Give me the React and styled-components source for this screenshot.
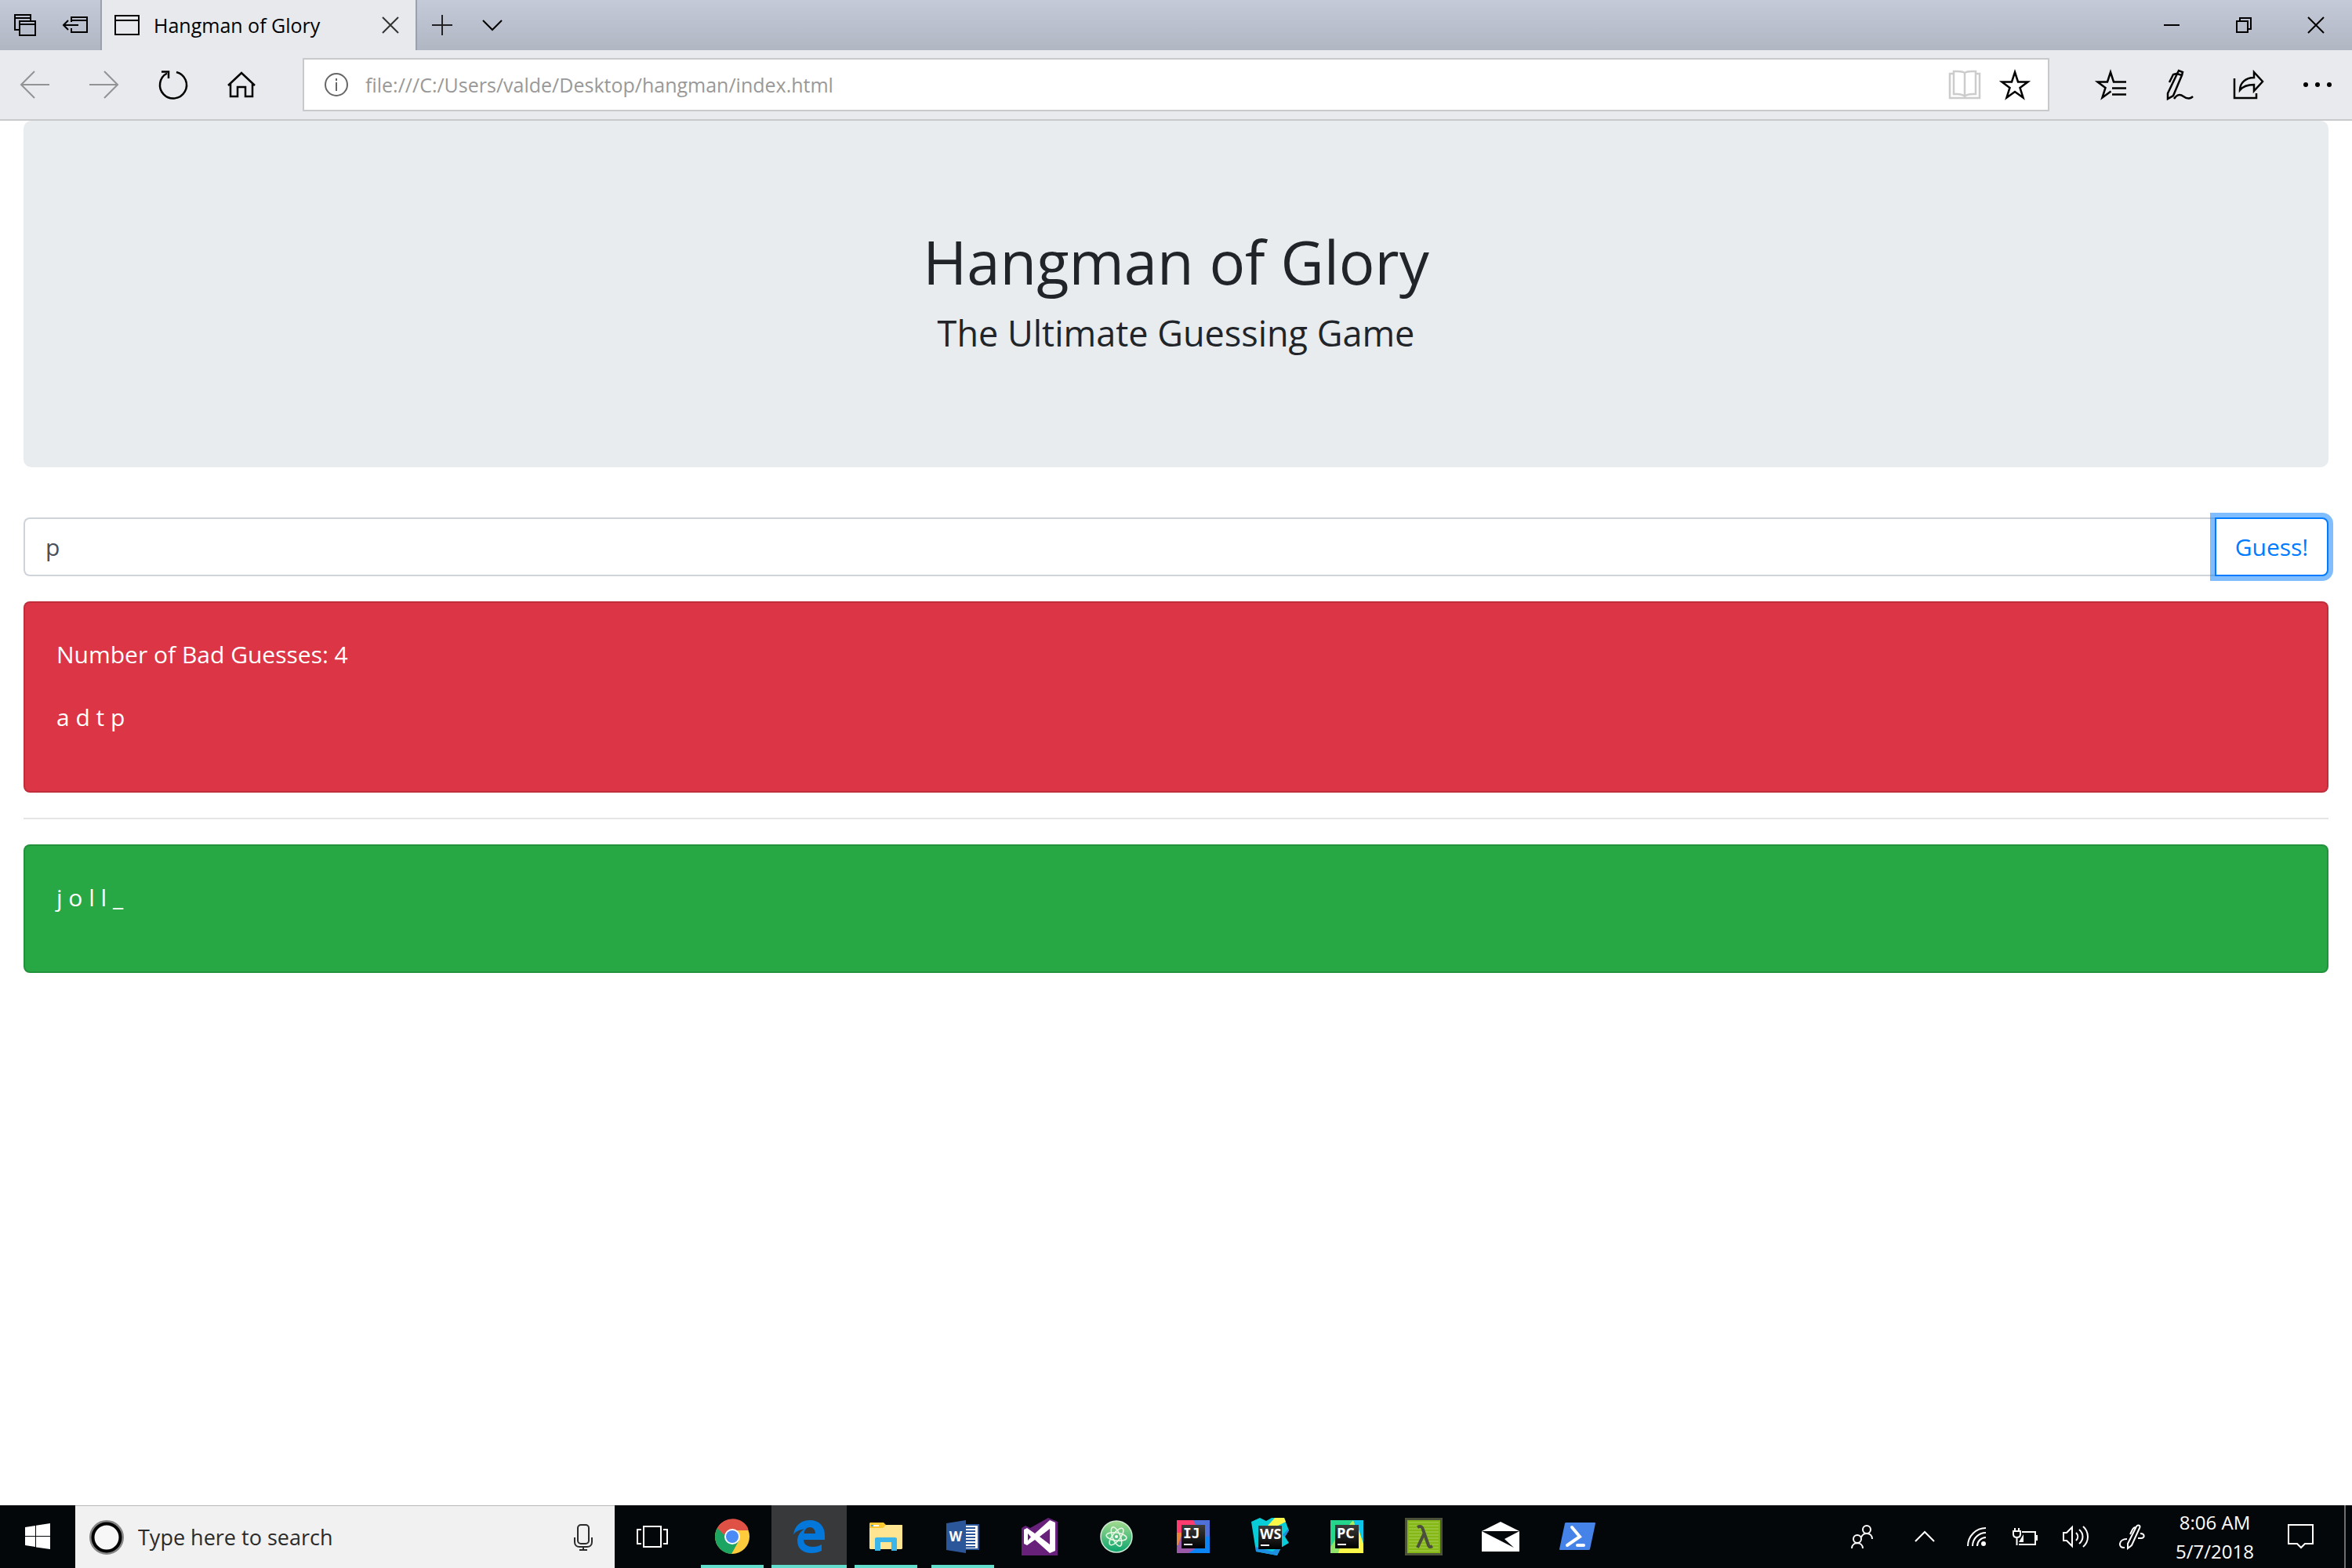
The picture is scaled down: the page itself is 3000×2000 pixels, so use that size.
import React, { useState } from 'react';
import styled, { createGlobalStyle } from 'styled-components';

const ui = '"Segoe UI", "Open Sans", "Noto Sans", sans-serif';

const GlobalStyle = createGlobalStyle`
  *, *::before, *::after { box-sizing: border-box; }
  body { margin: 0; background: #fff; font-family: ${ui}; }
  button, input { font-family: inherit; }
  h1, p { margin: 0; font-weight: 400; }
  svg { display: block; flex: none; overflow: visible; }
`;

const Screen = styled.div`
  display: flex;
  flex-direction: column;
  min-height: 100vh;
`;

/* browser chrome */
const TitleBar = styled.div`
  display: flex;
  height: 64px;
  background: linear-gradient(#c4cad8, #b0b6c2);
`;

const BarTools = styled.div`
  display: flex;
  align-items: center;
`;

const IconButton = styled.button`
  display: flex;
  align-items: center;
  justify-content: center;
  width: ${(p) => p.$w}px;
  height: 100%;
  padding: 0;
  border: 0;
  background: transparent;
  color: ${(p) => p.$color || '#000'};
`;

const Tab = styled.div`
  display: flex;
  align-items: center;
  width: 404px;
  padding-left: 16px;
  border: solid #9aa0ae;
  border-width: 0 2px;
  background: #e8e9ed;
  font-size: 25px;
`;

const TabTitle = styled.span`
  flex: 1;
  padding-left: 18px;
  white-space: nowrap;
`;

const Spacer = styled.div`
  flex: 1;
`;

const Toolbar = styled.div`
  display: flex;
  align-items: center;
  height: 90px;
  border-bottom: 2px solid #c8c9cb;
  background: #e9eaed;
`;

const AddressBox = styled.label`
  display: flex;
  align-items: center;
  flex: 1;
  height: 68px;
  margin: 0 34px;
  padding: 0 10px 0 26px;
  border: 2px solid #c8c9cb;
  background: #fff;
  color: #666;
`;

const Address = styled.input`
  flex: 1;
  min-width: 0;
  padding: 0 0 0 22px;
  border: 0;
  outline: 0;
  background: transparent;
  color: #999;
  font-size: 25px;
`;

/* page */
const Page = styled.main`
  flex: 1;
  padding: 0 30px;
  color: #212529;
  font-size: 30px;
  line-height: 48px;
`;

const Jumbotron = styled.header`
  padding: 132px 64px 126px;
  margin-bottom: 64px;
  border-radius: 10px;
  background: #e8ecef;
  text-align: center;
`;

const Title = styled.h1`
  margin-bottom: 14px;
  font-size: 76px;
  line-height: 96px;
`;

const Subtitle = styled.p`
  margin-bottom: 16px;
  font-size: 45px;
  line-height: 58px;
`;

const GuessForm = styled.form`
  display: flex;
  height: 75px;
  margin-bottom: 32px;
`;

const GuessInput = styled.input`
  flex: 1;
  min-width: 0;
  padding: 0 26px;
  border: 2px solid #ced4da;
  border-right: 0;
  border-radius: 8px 0 0 8px;
  outline: 0;
  color: #495057;
  font-size: 30px;
`;

const GuessButton = styled.button`
  width: 145px;
  padding: 0;
  border: 2px solid #007bff;
  border-radius: 0 8px 8px 0;
  background: #fff;
  box-shadow: 0 0 0 6px rgba(0, 123, 255, 0.5);
  color: #007bff;
  font-size: 30px;
`;

const Card = styled.section`
  padding: 42px 40px 38px;
  border: 2px solid rgba(0, 0, 0, 0.125);
  border-radius: 8px;
  background: ${(p) => p.$bg};
  background-clip: border-box;
  color: #fff;
`;

const CardText = styled.p`
  margin-bottom: 32px;
`;

const Rule = styled.hr`
  margin: 32px 0;
  border: 0;
  border-top: 2px solid #e5e5e5;
`;

/* taskbar */
const TaskBar = styled.footer`
  display: flex;
  height: 80px;
  background: #04070a;
  color: #fff;
`;

const Search = styled.label`
  display: flex;
  align-items: center;
  width: 688px;
  padding: 0 28px 0 18px;
  border-top: 1px solid #b8b8b8;
  background: #f1f1f1;
`;

const SearchInput = styled.input`
  flex: 1;
  min-width: 0;
  padding: 0 0 0 18px;
  border: 0;
  outline: 0;
  background: transparent;
  font-size: 27px;
  &::placeholder { color: #2b2b2b; opacity: 1; }
`;

const Apps = styled.nav`
  display: flex;
  gap: 2px;
  margin-left: 6px;
`;

const AppButton = styled.button`
  display: flex;
  align-items: center;
  justify-content: center;
  width: 96px;
  padding: 0;
  border: 0;
  background-color: ${(p) => (p.$active ? '#38393b' : 'transparent')};
  background-image: ${(p) => (p.$open ? 'linear-gradient(#62dccb, #62dccb)' : 'none')};
  background-repeat: no-repeat;
  background-position: bottom center;
  background-size: ${(p) => (p.$active ? '96px' : '80px')} 4px;
`;

const Clock = styled.button`
  width: 140px;
  padding: 0;
  border: 0;
  background: transparent;
  color: #fff;
  font-size: 24px;
  line-height: 37px;
  text-align: center;
`;

const ShowDesktop = styled.button`
  width: 10px;
  margin-left: 17px;
  padding: 0;
  border: 0;
  border-left: 2px solid #6c6e70;
  background: transparent;
`;

const Icon = ({ w, h = w, sw = 2, children }) => (
  <svg width={w} height={h} viewBox={`0 0 ${w} ${h}`} fill="none" stroke="currentColor" strokeWidth={sw} aria-hidden="true">
    {children}
  </svg>
);

const TabsAside = () => (
  <Icon w={28}><path d="M7 20H1V1h20v7M1 5h20" /><path d="M7 9h20v18H7zM7 13h20" /></Icon>
);
const SetAside = () => (
  <Icon w={32} h={22}><path d="M11 7V1h20v19H11v-5M11 5h20M1 11h19M7 5l-6 6 6 6" /></Icon>
);
const PageIcon = () => (
  <Icon w={32} h={26}><path d="M1 1h30v24H1zM1 7h30" /></Icon>
);
const Cross = () => <Icon w={20}><path d="M0 0l20 20M20 0L0 20" /></Icon>;
const Plus = () => <Icon w={26}><path d="M13 0v26M0 13h26" /></Icon>;
const Down = () => <Icon w={26} h={14}><path d="M1 1l12 12L25 1" /></Icon>;
const Minimize = () => <Icon w={20}><path d="M0 10h20" /></Icon>;
const Restore = () => <Icon w={20}><path d="M1 5h14v14H1zM5 5V1h14v14h-4" /></Icon>;
const Back = () => <Icon w={37} h={34}><path d="M37 17H1M18 0L1 17l17 17" /></Icon>;
const Forward = () => <Icon w={37} h={34}><path d="M0 17h36M19 0l17 17-17 17" /></Icon>;
const Refresh = () => (
  <Icon w={36} h={36} sw={2.5}><path d="M23 2A17 17 0 1 1 11 3.500" /><path d="M4 1.500h9V10" /></Icon>
);
const Home = () => (
  <Icon w={36} h={34} sw={2.5}><path d="M1 18L18 2l17 16M4 15v17h9V20h10v12h9V15" /></Icon>
);
const Info = () => (
  <Icon w={30}><circle cx="15" cy="15" r="14" /><path d="M15 12v11M15 7v3" /></Icon>
);
const Book = () => (
  <Icon w={40} h={36} sw={2.5}>
    <path d="M6 4H1v31h38V4h-5" /><path d="M6 1c5 0 11-1 14 2 3-3 9-2 14-2v29c-5 0-11-1-14 3-3-4-9-3-14-3zM20 3v30" />
  </Icon>
);
const starPath = 'M20 4l4 12.500H36.500L26.500 24 30.500 36.500 20 29 9.500 36.500l4-12.500-10-7.500H16z';
const Star = () => <Icon w={40} sw={2.5}><path d={starPath} /></Icon>;
const Favorites = () => (
  <Icon w={40} sw={2.5}>
    <path d="M40 16.500H24L20 4l-4 12.500H3.500l10 7.500-4 12.500 11-8M22 24.500h18M22 32.500h18" />
  </Icon>
);
const Notes = () => (
  <Icon w={36} h={38} sw={2.5}>
    <path d="M3 30L15 5l6 2L10 33l-7 4zM15 5l2-4 5 2-1 4M14 5l-4 1-5 10M3 30v7" />
    <path d="M11 37c4-6 8-6 12-3s8 4 12 0" />
  </Icon>
);
const Share = () => (
  <Icon w={40} h={38} sw={2.5}>
    <path d="M2 11v25h28v-6" /><path d="M27 3l11 12-11 12v-8c-9 0-14 2-18 7 0-9 7-16 18-16z" />
  </Icon>
);
const More = () => (
  <Icon w={36} h={6} sw={0}>
    <g fill="currentColor"><circle cx="3" cy="3" r="3" /><circle cx="18" cy="3" r="3" /><circle cx="33" cy="3" r="3" /></g>
  </Icon>
);

const WindowsLogo = () => (
  <Icon w={32} h={34} sw={0}>
    <path fill="#fff" d="M0 5l13-2v13H0zM14 2.800L32 0v16H14zM0 17h13v13L0 28zM14 17h18v16l-18-2.500z" />
  </Icon>
);
const Cortana = () => (
  <Icon w={44}>
    <circle cx="22" cy="22" r="20" stroke="#858585" strokeWidth="4" /><circle cx="22" cy="22" r="17.500" stroke="#000" strokeWidth="4" fill="#f7f7f7" />
  </Icon>
);
const Mic = () => (
  <Icon w={24} h={34}><g stroke="#2b2b2b"><rect x="5" y="1" width="14" height="24" rx="4" /><path d="M1 17v6c0 4 3 6 6 6h10c3 0 6-2 6-6v-6M12 29v4M7 33h10" /></g></Icon>
);
const TaskView = () => (
  <Icon w={40} h={28}><path d="M9 1h22v26H9zM6 5H1v18h5M34 5h5v18h-5" /></Icon>
);
const Chrome = () => (
  <svg width="44" height="44" viewBox="0 0 44 44" aria-hidden="true">
    <circle cx="22" cy="22" r="22" fill="#fdcb3c" />
    <path d="M22 22L3 11A22 22 0 0 0 21 44l9.500-17z" fill="#1ba462" />
    <path d="M3 11a22 22 0 0 1 39.500 3H22l-8.500 13z" fill="#df5145" />
    <path d="M3 11l10 17 9-8z" fill="#1ba462" />
    <path d="M3 11a22 22 0 0 1 39.500 1H22a10 10 0 0 0-10 8z" fill="#df5145" />
    <circle cx="22" cy="22" r="10" fill="#fff" /><circle cx="22" cy="22" r="8" fill="#4a8bf5" />
  </svg>
);
const Edge = () => (
  <svg width="40" height="42" viewBox="0 0 40 42" aria-hidden="true">
    <path fill="#0378da" fillRule="evenodd" d="M0 18.500C1.500 7 10 0 21 0c12 0 19 8 19 19v6H13c0 6 5 9 12 9 4 0 8-1 11-3v8c-4 2-8 3-13 3C12 42 5 36 5 26c0-6 4-12 9-14.500C7 12 2 15 0 18.500zM13.500 17H28c0-5-3-8-7-8s-7 3-7.500 8z" />
  </svg>
);
const Explorer = () => (
  <svg width="42" height="36" viewBox="0 0 42 36" aria-hidden="true">
    <path fill="#fdc72f" d="M0 1l1-1h17l3 3h21v6H0z" /><path fill="#fff" d="M2 3h10v2H2z" /><path fill="#35b2e8" d="M2 3h3v2H2z" />
    <path fill="#ffe591" d="M0 7h17l4-4h20l1 1v29l-1 1H1l-1-1z" /><path fill="#3cb5ea" d="M7 20l2-1h24l2 1v16h-7V25H14v11H7z" />
  </svg>
);
const Word = () => (
  <svg width="42" height="42" viewBox="0 0 42 42" aria-hidden="true">
    <path fill="#fff" stroke="#2b579a" strokeWidth="2" d="M22 6h19v31H22z" />
    <path stroke="#2b579a" strokeWidth="2" d="M24 10h13M24 14h13M24 18h13M24 22h13M24 26h13M24 30h13M24 34h13" />
    <path fill="#2b579a" d="M0 4l25-4v42L0 38z" />
    <text x="12" y="27" textAnchor="middle" fontFamily="Open Sans" fontWeight="700" fontSize="17" fill="#fff">W</text>
  </svg>
);
const VisualStudio = () => (
  <svg width="46" height="48" viewBox="0 0 46 48" aria-hidden="true">
    <path fill="#68217a" d="M0 13l5-3 6 3L34 0l12 5v43H0z" />
    <path fill="#fff" fillRule="evenodd" d="M3 15l4-2 10 7L36 3l7 3v36l-7 3-19-17-10 7-4-2zm5 5v9l4-4.500zM36 14L23 24l13 10z" />
  </svg>
);
const Atom = () => (
  <svg width="42" height="42" viewBox="0 0 42 42" aria-hidden="true">
    <defs><linearGradient id="atom" x2="0" y2="1"><stop stopColor="#a5db8e" /><stop offset="1" stopColor="#0aa56e" /></linearGradient></defs>
    <circle cx="21" cy="21" r="20" fill="url(#atom)" stroke="#cfe9d5" strokeWidth="1.500" />
    <g fill="none" stroke="#e9f7e6" strokeWidth="1.500">
      <ellipse cx="21" cy="21" rx="13" ry="5" transform="rotate(8 21 21)" /><ellipse cx="21" cy="21" rx="13" ry="5" transform="rotate(68 21 21)" />
      <ellipse cx="21" cy="21" rx="13" ry="5" transform="rotate(128 21 21)" />
    </g>
    <circle cx="21" cy="21" r="2" fill="#fff" />
  </svg>
);
const Badge = ({ x = 6, y = 6, label, font = 'Open Sans' }) => (
  <g>
    <defs><linearGradient id={`badge${label}`} x2="0" y2="1"><stop stopColor="#3c3c3c" /><stop offset="1" stopColor="#000" /></linearGradient></defs>
    <rect x={x} y={y} width="30" height="30" fill={`url(#badge${label})`} />
    <text x={x + 2} y={y + 17} fontFamily={font} fontWeight="700" fontSize="18" fill="#fff">{label}</text>
    <path fill="#fff" d={`M${x + 3} ${y + 24}h11v2h-11z`} />
  </g>
);
const IntelliJ = () => (
  <svg width="42" height="42" viewBox="0 0 42 42" aria-hidden="true">
    <path fill="#0b84f5" d="M0 0h42v42H0z" /><path fill="#4f70d8" d="M20 0h22v20L30 24z" /><path fill="#fe3c70" d="M0 0h21l5 10L4 20H0z" />
    <path fill="#e9853a" d="M0 16h8v16H0z" /><path fill="#9a5aa8" d="M0 36l6-16 17 17-8 5H0z" />
    <Badge label="IJ" font="DejaVu Sans Mono" />
  </svg>
);
const WebStorm = () => (
  <svg width="48" height="48" viewBox="0 0 48 48" aria-hidden="true">
    <path fill="#08cdd8" d="M0 5l11-5 8 4 7-4h16l6 16-5 8 5 8-10 6-5 10-27-5z" />
    <path fill="#fcf84a" d="M30 0h12l2 5-10 5H21z" /><path fill="#1e8fe0" d="M6 37l21 6 7-5h3l-4 10-27-5zM47 14l1 2-5 8-3-2z" />
    <Badge x={9} y={10} label="WS" />
  </svg>
);
const PyCharm = () => (
  <svg width="42" height="42" viewBox="0 0 42 42" aria-hidden="true">
    <path fill="#25d58c" d="M0 0h42v42H0z" /><path fill="#0cc5e8" d="M28 0h14v32L30 12z" /><path fill="#a9ee63" d="M22 8l7-8 3 8z" />
    <path fill="#8fe36b" d="M0 34l8-12 10 18-4 2H0z" /><path fill="#fcf84a" d="M36 12l6 18v12H10l2-6z" />
    <Badge label="PC" />
  </svg>
);
const Lambda = () => (
  <svg width="48" height="48" viewBox="0 0 48 48" aria-hidden="true">
    <path fill="#85b817" stroke="#4c5239" strokeWidth="3" d="M1.500 1.500h45v45h-45z" />
    <path stroke="#a9cf58" strokeWidth="1" d="M5 6h38M5 10h38M5 14h38M5 18h38M5 22h38M5 26h38M5 30h38M5 34h38M5 38h38M5 42h38" />
    <path fill="none" stroke="#4c4f3d" strokeWidth="4" d="M16 12c4-2 6-1 7 3l7 20c1 2 2 3 5 1M25 19l-9 19" />
  </svg>
);
const MailIcon = () => (
  <svg width="48" height="38" viewBox="0 0 48 38" aria-hidden="true">
    <path fill="#fff" d="M0 12L24 0l24 12v26H0zM0 12l41 21-12-11 19-10z" fillRule="evenodd" />
  </svg>
);
const PowerShell = () => (
  <svg width="46" height="36" viewBox="0 0 46 36" aria-hidden="true">
    <path fill="#4583e8" d="M9 0h36q1 0 1 1l-7 33q0 1-2 1H1q-1 0-1-1L7 1q0-1 2-1z" />
    <path fill="none" stroke="#fff" strokeWidth="4" strokeLinecap="round" d="M16 6l10 12L10 29M23 29h8" />
  </svg>
);

const People = () => (
  <Icon w={28} h={30}>
    <circle cx="20" cy="6" r="5" /><circle cx="8" cy="18" r="5" /><path d="M1 30c0-9 14-9 14 0M13 16c2-7 14-7 14 2" />
  </Icon>
);
const Up = () => <Icon w={26} h={14}><path d="M1 13L13 1l12 12" /></Icon>;
const Wifi = () => (
  <Icon w={24} h={24}>
    <path d="M1 24A23 23 0 0 1 24 1M7 24A17 17 0 0 1 24 7M13 24a11 11 0 0 1 11-11" /><circle cx="21" cy="21" r="3" fill="currentColor" stroke="none" />
  </Icon>
);
const Battery = () => (
  <Icon w={32} h={22}>
    <path d="M12 5h17v16H8M31 9v7M3 0v4M8 0v4M1 4h9v4c0 3-2 4-4.500 4S1 11 1 8zM5.500 12v10" /><path d="M8 18h6V8z" fill="currentColor" stroke="none" />
  </Icon>
);
const Speaker = () => (
  <Icon w={33} h={28}>
    <path d="M1 9h4l7-7v24l-7-7H1zM17 9c3 3 3 7 0 10M21 5c6 5 6 13 0 18M26 1c8 7 8 19 0 26" />
  </Icon>
);
const Ink = () => (
  <Icon w={32} h={32}>
    <path d="M11 25L22 3c2-3 6-1 4 2L16 27l-5 4zM21 4c-4 0-4 4-7 9M10 19c-11 0-12 12-3 11M27 12c6 0 6 6 1 6h-4" />
  </Icon>
);
const Notice = () => <Icon w={33} h={32}><path d="M1 1h31v24H22l-5 5-5-5H1z" /></Icon>;

const apps = [
  ['Google Chrome', Chrome, true],
  ['Microsoft Edge', Edge, true, true],
  ['File Explorer', Explorer, true],
  ['Word', Word, true],
  ['Visual Studio', VisualStudio],
  ['Atom', Atom],
  ['IntelliJ IDEA', IntelliJ],
  ['WebStorm', WebStorm],
  ['PyCharm', PyCharm],
  ['Lambda', Lambda],
  ['Mail', MailIcon],
  ['PowerShell', PowerShell],
];

export default function App() {
  const [guess, setGuess] = useState('p');
  return (
    <Screen>
      <GlobalStyle />
      <TitleBar>
        <BarTools>
          <IconButton $w={64} aria-label="Tabs you've set aside"><TabsAside /></IconButton>
          <IconButton $w={64} aria-label="Set these tabs aside"><SetAside /></IconButton>
        </BarTools>
        <Tab>
          <PageIcon />
          <TabTitle>Hangman of Glory</TabTitle>
          <IconButton $w={64} $color="#333" aria-label="Close tab"><Cross /></IconButton>
        </Tab>
        <BarTools>
          <IconButton $w={64} $color="#222" aria-label="New tab"><Plus /></IconButton>
          <IconButton $w={64} aria-label="Tab previews"><Down /></IconButton>
        </BarTools>
        <Spacer />
        <BarTools>
          <IconButton $w={92} aria-label="Minimize"><Minimize /></IconButton>
          <IconButton $w={92} aria-label="Restore"><Restore /></IconButton>
          <IconButton $w={92} aria-label="Close"><Cross /></IconButton>
        </BarTools>
      </TitleBar>
      <Toolbar>
        <IconButton $w={88} $color="#929395" aria-label="Back"><Back /></IconButton>
        <IconButton $w={88} $color="#929395" aria-label="Forward"><Forward /></IconButton>
        <IconButton $w={88} aria-label="Refresh"><Refresh /></IconButton>
        <IconButton $w={88} aria-label="Home"><Home /></IconButton>
        <AddressBox>
          <Info />
          <Address aria-label="Address" defaultValue="file:///C:/Users/valde/Desktop/hangman/index.html" />
          <IconButton $w={64} $color="#ccc" aria-label="Reading view"><Book /></IconButton>
          <IconButton $w={64} aria-label="Add to favorites"><Star /></IconButton>
        </AddressBox>
        <IconButton $w={88} aria-label="Favorites"><Favorites /></IconButton>
        <IconButton $w={88} aria-label="Add notes"><Notes /></IconButton>
        <IconButton $w={88} aria-label="Share"><Share /></IconButton>
        <IconButton $w={88} aria-label="More"><More /></IconButton>
      </Toolbar>

      <Page>
        <Jumbotron>
          <Title>Hangman of Glory</Title>
          <Subtitle>The Ultimate Guessing Game</Subtitle>
        </Jumbotron>
        <GuessForm onSubmit={(e) => e.preventDefault()}>
          <GuessInput aria-label="Your guess" value={guess} onChange={(e) => setGuess(e.target.value)} />
          <GuessButton type="submit">Guess!</GuessButton>
        </GuessForm>
        <Card $bg="#dc3545">
          <CardText>Number of Bad Guesses: 4</CardText>
          <CardText>a d t p</CardText>
        </Card>
        <Rule />
        <Card $bg="#28a745">
          <CardText>j o l l _</CardText>
        </Card>
      </Page>

      <TaskBar>
        <IconButton $w={96} aria-label="Start"><WindowsLogo /></IconButton>
        <Search>
          <Cortana />
          <SearchInput aria-label="Search" placeholder="Type here to search" />
          <Mic />
        </Search>
        <IconButton $w={96} $color="#fff" aria-label="Task view"><TaskView /></IconButton>
        <Apps>
          {apps.map(([name, Logo, open, active]) => (
            <AppButton key={name} aria-label={name} $open={open} $active={active}><Logo /></AppButton>
          ))}
        </Apps>
        <Spacer />
        <IconButton $w={96} $color="#fff" aria-label="People"><People /></IconButton>
        <IconButton $w={64} $color="#fff" aria-label="Show hidden icons"><Up /></IconButton>
        <IconButton $w={68} $color="#fff" aria-label="Network"><Wifi /></IconButton>
        <IconButton $w={56} $color="#fff" aria-label="Battery"><Battery /></IconButton>
        <IconButton $w={72} $color="#fff" aria-label="Volume"><Speaker /></IconButton>
        <IconButton $w={72} $color="#fff" aria-label="Ink workspace"><Ink /></IconButton>
        <Clock>8:06 AM<br />5/7/2018</Clock>
        <IconButton $w={78} $color="#fff" aria-label="Notifications"><Notice /></IconButton>
        <ShowDesktop aria-label="Show desktop" />
      </TaskBar>
    </Screen>
  );
}
